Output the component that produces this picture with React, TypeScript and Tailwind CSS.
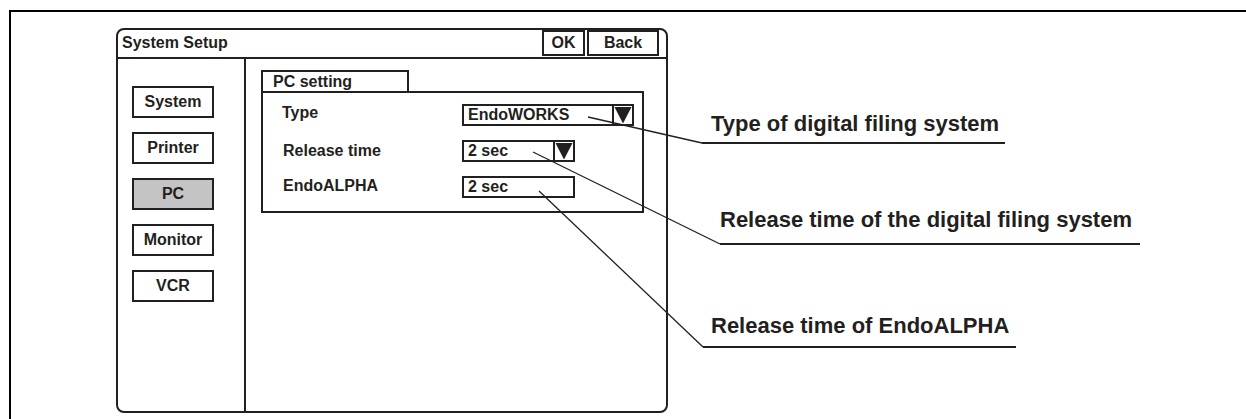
import React from "react";

function Arrow() {
  return (
    <div className="w-[20px] h-full border-l-2 border-[#231f20] flex items-center justify-center">
      <svg width="19" height="18" viewBox="0 0 19 18">
        <polygon points="0.5,0.5 18.5,0.5 9.5,18" fill="#231f20" />
      </svg>
    </div>
  );
}

function Field({ text, width, arrow }: { text: string; width: string; arrow?: boolean }) {
  return (
    <div className={`${width} h-[22px] border-2 border-[#231f20] flex items-stretch`}>
      <div className="flex-1 pl-[4px] leading-[18px] text-[16px] font-bold">{text}</div>
      {arrow && <Arrow />}
    </div>
  );
}

function SideButton({ label, active }: { label: string; active?: boolean }) {
  return (
    <div
      className={`w-[82px] h-[32px] border-2 border-[#231f20] flex items-center justify-center text-[16px] font-bold ${
        active ? "bg-[#c4c4c4]" : "bg-white"
      }`}
    >
      {label}
    </div>
  );
}

export default function App() {
  return (
    <div className="relative w-[1246px] h-[419px] bg-white overflow-hidden text-[#231f20] font-['Liberation_Sans',Arial,sans-serif]">
      <div className="ml-[9px] mt-[10px] h-[409px] border-t-2 border-l-2 border-black flex items-start">
        {/* Dialog */}
        <div className="ml-[105px] mt-[16px] w-[552px] h-[385px] border-2 border-[#231f20] rounded-[8px] flex flex-col shrink-0">
          <div className="h-[29px] border-b-2 border-[#231f20] flex items-start">
            <div className="flex-1 pl-[4px] leading-[25px] text-[16px] font-bold">System Setup</div>
            <div className="flex gap-[2px] mr-[7px]">
              <div className="w-[43px] h-[26px] border-2 border-[#231f20] flex items-center justify-center text-[16px] font-bold">
                OK
              </div>
              <div className="w-[72px] h-[26px] border-2 border-[#231f20] flex items-center justify-center text-[16px] font-bold">
                Back
              </div>
            </div>
          </div>
          <div className="flex-1 flex">
            <div className="w-[128px] border-r-2 border-[#231f20] flex flex-col pt-[27px] pl-[14px] gap-[14px]">
              <SideButton label="System" />
              <SideButton label="Printer" />
              <SideButton label="PC" active />
              <SideButton label="Monitor" />
              <SideButton label="VCR" />
            </div>
            <div className="flex-1 pl-[15px] pt-[11px]">
              <div className="w-[148px] h-[21px] border-t-2 border-x-2 border-[#231f20] pl-[10px] leading-[19px] text-[16px] font-bold">
                PC setting
              </div>
              <div className="w-[383px] h-[122px] border-2 border-[#231f20] flex flex-col pt-[11px] gap-[14px]">
                <div className="flex items-center h-[22px]">
                  <div className="w-[199px] pl-[19px] text-[16px] font-bold mb-[5px]">Type</div>
                  <Field text="EndoWORKS" width="w-[172px]" arrow />
                </div>
                <div className="flex items-center h-[22px]">
                  <div className="w-[199px] pl-[20px] text-[16px] font-bold mb-[1px]">Release time</div>
                  <Field text="2 sec" width="w-[113px]" arrow />
                </div>
                <div className="flex items-center h-[22px]">
                  <div className="w-[199px] pl-[20px] text-[16px] font-bold mb-[3px]">EndoALPHA</div>
                  <Field text="2 sec" width="w-[113px]" />
                </div>
              </div>
            </div>
          </div>
        </div>

        {/* Annotations */}
        <div className="ml-[34px] mt-[99px] flex flex-col items-start">
          <div className="w-[303px] border-b-2 border-[#231f20] pl-[9px] pb-[5px] leading-[26px] text-[22px] font-bold whitespace-nowrap">
            Type of digital filing system
          </div>
          <div className="ml-[18px] mt-[63px] w-[420px] border-b-2 border-[#231f20] pb-[10px] leading-[26px] text-[22px] font-bold whitespace-nowrap">
            Release time of the digital filing system
          </div>
          <div className="ml-[1px] mt-[68px] w-[313px] border-b-2 border-[#231f20] pl-[8px] pb-[7px] leading-[26px] text-[22px] font-bold whitespace-nowrap">
            Release time of EndoALPHA
          </div>
        </div>
      </div>

      {/* Callout lines */}
      <svg className="absolute inset-0 pointer-events-none" width="1246" height="419" viewBox="0 0 1246 419">
        <line x1="588" y1="117" x2="702" y2="143" stroke="#231f20" strokeWidth="1.3" />
        <line x1="533" y1="152" x2="720" y2="244" stroke="#231f20" strokeWidth="1.3" />
        <line x1="539" y1="191" x2="703" y2="347" stroke="#231f20" strokeWidth="1.3" />
      </svg>
    </div>
  );
}
